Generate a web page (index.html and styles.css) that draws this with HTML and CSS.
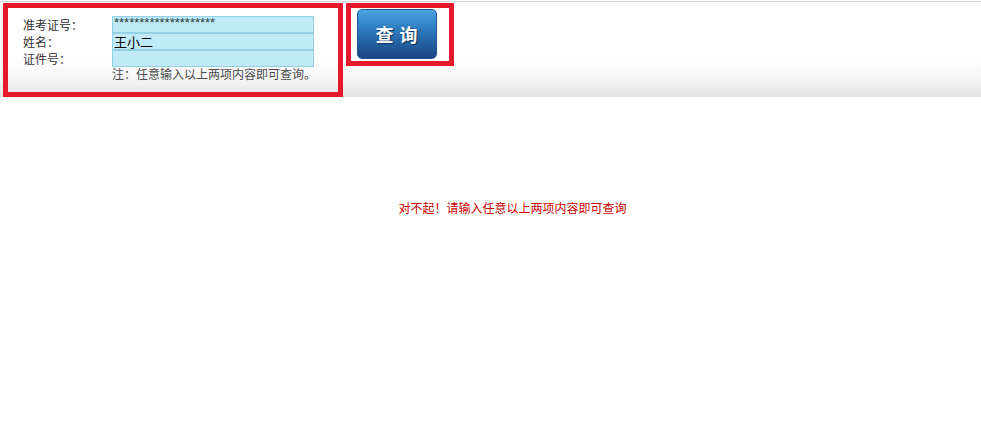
FILE: index.html
```html
<!DOCTYPE html>
<html lang="zh-CN">
<head>
<meta charset="utf-8">
<title>查询</title>
<link rel="stylesheet" href="styles.css">
</head>
<body>
<div class="topline"></div>
<div class="header">
  <div class="box form-box">
    <div class="labels">
      <div class="label">准考证号：</div>
      <div class="label">姓名：</div>
      <div class="label">证件号：</div>
    </div>
    <div class="fields">
      <div class="field stars">********************</div>
      <div class="field name">王小二</div>
      <div class="field"></div>
      <div class="note">注：任意输入以上两项内容即可查询。</div>
    </div>
  </div>
  <div class="box btn-box">
    <button class="query-btn">查 询</button>
  </div>
</div>
<div class="message">对不起！请输入任意以上两项内容即可查询</div>
</body>
</html>
```

FILE: styles.css
```css
html, body {
  margin: 0;
  padding: 0;
  background: #ffffff;
  font-family: "Noto Sans CJK SC", "Liberation Sans", sans-serif;
}

.topline {
  height: 1px;
  margin-top: 1px;
  background: #cbd5e3;
}

.header {
  height: 95px;
  box-sizing: border-box;
  padding: 1px 0 0 3px;
  display: flex;
  align-items: flex-start;
  gap: 3px;
  background: linear-gradient(to bottom, #ffffff 0px, #ffffff 58px, #f6f6f6 76px, #e4e4e4 95px);
}

.box {
  border: 5px solid #e8192a;
  box-sizing: border-box;
}

.form-box {
  width: 340px;
  height: 94px;
  display: flex;
  padding: 8px 0 0 15px;
}

.labels {
  width: 89px;
  display: flex;
  flex-direction: column;
}

.label {
  height: 17px;
  line-height: 17px;
  font-size: 12px;
  color: #333333;
}

.fields {
  width: 202px;
  display: flex;
  flex-direction: column;
}

.field {
  height: 17px;
  box-sizing: border-box;
  border: 1px solid #93d2e2;
  background: #c0ebf6;
  padding-left: 1px;
  line-height: 15px;
  color: #000;
}

.stars {
  font-family: "Liberation Sans", sans-serif;
  font-size: 13px;
  line-height: 12px;
  color: #2c3e44;
}

.name {
  font-size: 13px;
}

.note {
  font-size: 12px;
  line-height: 14px;
  color: #4a4a4a;
  white-space: nowrap;
  margin-top: 0px;
}

.btn-box {
  width: 108px;
  height: 63px;
  padding: 1px 0 0 6px;
}

.query-btn {
  display: block;
  width: 80px;
  height: 50px;
  margin: 0;
  padding: 0;
  border: 1px solid #1e5693;
  border-radius: 5px;
  background: linear-gradient(to bottom, #4aa3dd 0%, #2f80c4 35%, #24609f 70%, #1a4585 100%);
  color: #ffffff;
  font-family: "Noto Sans CJK SC", sans-serif;
  font-size: 18px;
  font-weight: bold;
  letter-spacing: 1px;
  text-shadow: 1px 1px 1px #0d2f5c;
  cursor: pointer;
}

.message {
  margin-top: 104px;
  padding-left: 44px;
  text-align: center;
  font-size: 12px;
  line-height: 14px;
  color: #cc0000;
}
```
